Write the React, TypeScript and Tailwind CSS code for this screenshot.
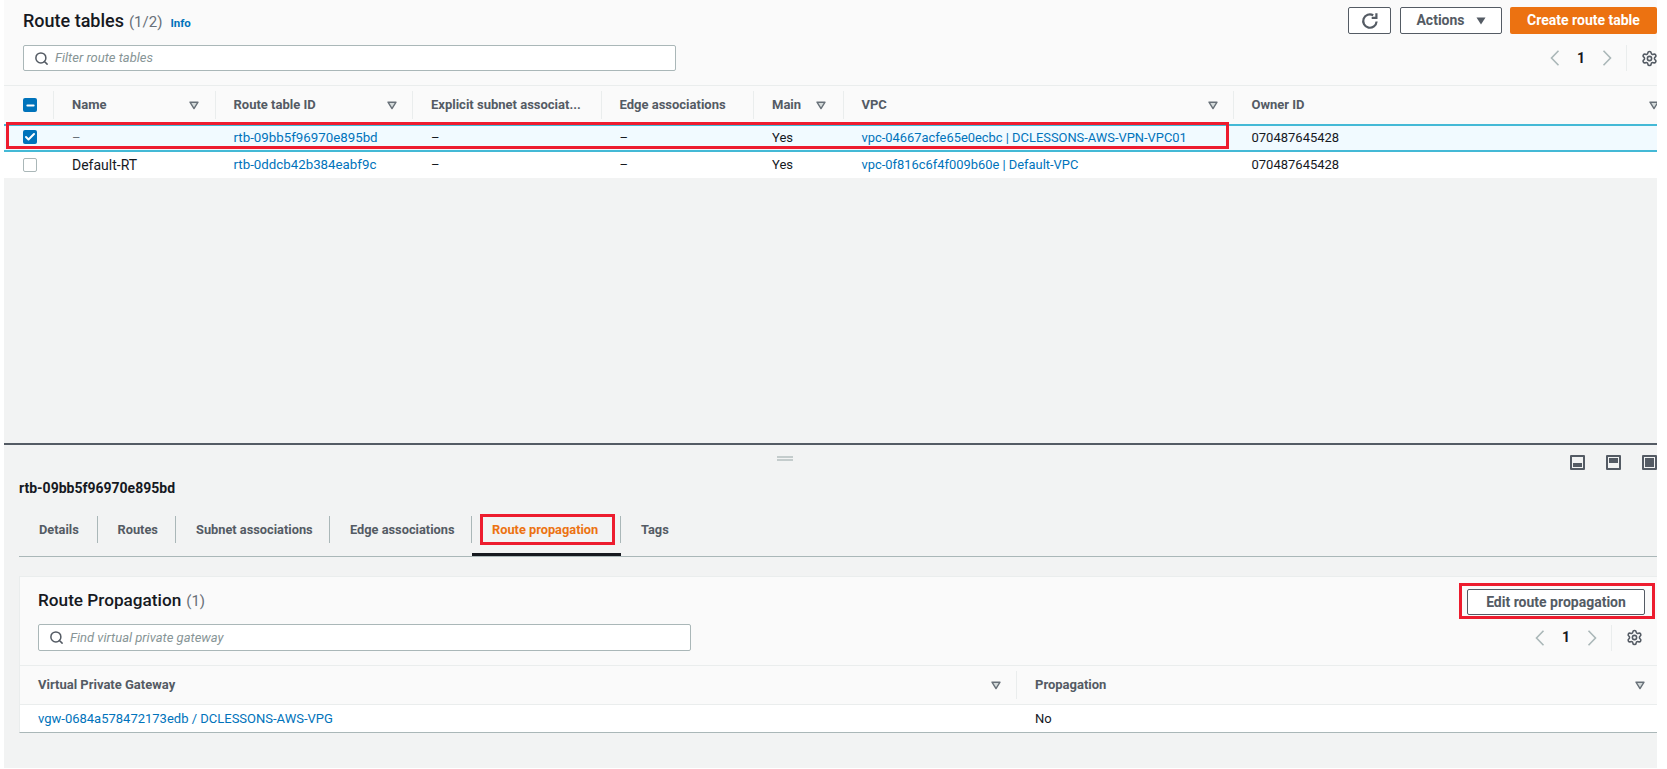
import { Search, Settings, Check, Minus } from "lucide-react";

const Caret = ({ className = "" }: { className?: string }) => (
  <svg viewBox="0 0 10 10" className={`w-[10px] h-[10px] shrink-0 ${className}`}>
    <path d="M1 2.2h8L5 8.6z" fill="#d5dbdb" stroke="#687078" strokeWidth="1.4" strokeLinejoin="round" />
  </svg>
);

const Chevron = ({ d }: { d: string }) => (
  <svg viewBox="0 0 16 16" className="w-4 h-4" fill="none" stroke="#aab7b8" strokeWidth="1.6">
    <path d={d} />
  </svg>
);

const Pager = () => (
  <div className="flex items-center h-[26px]">
    <Chevron d="M11.5 0.8 L4.5 8 L11.5 15.2" />
    <span className="w-[36px] text-center text-[14px] font-bold text-[#16191f]">1</span>
    <Chevron d="M4.5 0.8 L11.5 8 L4.5 15.2" />
    <div className="ml-[11px] h-[26px] border-l border-[#eaeded]" />
    <Settings className="ml-[14px] w-[17px] h-[17px] text-[#545b64]" strokeWidth={2.2} />
  </div>
);

const SearchBox = ({ placeholder, className = "" }: { placeholder: string; className?: string }) => (
  <div className={`w-[653px] flex items-center bg-white border border-[#aab7b8] rounded-[2px] pl-[10px] ${className}`}>
    <Search className="w-[15px] h-[15px] text-[#545b64]" strokeWidth={2.4} />
    <span className="ml-[6px] italic text-[13px] text-[#879596]">{placeholder}</span>
  </div>
);

const cols = "grid grid-cols-[50px_161.5px_197.5px_188.5px_152.5px_89.5px_390px_1fr]";

const headers: { label: string; caret?: string }[] = [
  { label: "Name", caret: "absolute left-[135px]" },
  { label: "Route table ID", caret: "absolute left-[171px]" },
  { label: "Explicit subnet associat..." },
  { label: "Edge associations" },
  { label: "Main", caret: "absolute left-[62px]" },
  { label: "VPC", caret: "absolute left-[364px]" },
  { label: "Owner ID", caret: "absolute left-[415px]" },
];

const Link = ({ children, className = "text-[13px]" }: { children: React.ReactNode; className?: string }) => (
  <span className={`text-[#0073bb] ${className}`}>{children}</span>
);

const Cell = ({ children, className = "" }: { children?: React.ReactNode; className?: string }) => (
  <div className={`pl-[18px] flex items-center whitespace-nowrap overflow-hidden ${className}`}>{children}</div>
);

const PaneIcon = ({ children }: { children: React.ReactNode }) => (
  <svg viewBox="0 0 15 15" className="w-[15px] h-[15px] shrink-0">
    <rect x="0" y="0" width="15" height="15" rx="1" fill="#545b64" />
    {children}
  </svg>
);

const tabs = [
  { label: "Details", w: "w-[78.5px]" },
  { label: "Routes", w: "w-[78.5px]" },
  { label: "Subnet associations", w: "w-[154px]" },
  { label: "Edge associations", w: "w-[142px]" },
  { label: "Route propagation", w: "w-[149px]", active: true },
  { label: "Tags", w: "w-[80px]" },
];

export default function App() {
  return (
    <div className="w-[1667px] h-[769px] bg-white overflow-hidden pl-[4px] pr-[10px] pb-px font-['Roboto','Liberation_Sans',sans-serif] text-[14px] text-[#16191f]">
      <div className="h-[443px] bg-[#f2f3f3] flex flex-col">
        <div className="h-[86px] bg-[#fafafa] border-b border-[#eaeded] pl-[19px] pt-[7px] shrink-0 overflow-hidden">
          <div className="flex items-center justify-between h-[27px]">
            <div className="flex items-baseline">
              <span className="text-[18px] font-medium text-[#16191f]">Route tables</span>
              <span className="ml-[5px] text-[15px] text-[#687078]">(1/2)</span>
              <span className="ml-[8px] text-[11.5px] font-bold text-[#0073bb]">Info</span>
            </div>
            <div className="flex items-stretch h-[27px]">
              <div className="w-[43px] bg-white border border-[#545b64] rounded-[2px] flex items-center justify-center">
                <svg viewBox="0 0 18 18" className="w-[18px] h-[18px]" fill="none" stroke="#545b64" strokeWidth="2.2">
                  <path d="M15.6 9.5A6.7 6.7 0 1 1 12.2 3.2" />
                  <path d="M15.4 1.2v4.7h-4.7" />
                </svg>
              </div>
              <div className="ml-[9px] w-[102px] bg-white border border-[#545b64] rounded-[2px] flex items-center justify-center font-bold text-[#545b64]">
                Actions
                <svg viewBox="0 0 10 8" className="ml-[11px] w-[10px] h-[8px]"><path d="M0.5 0.5h9L5 7.5z" fill="#545b64" /></svg>
              </div>
              <div className="ml-[8px] w-[147px] bg-[#ec7211] rounded-[2px] flex items-center justify-center font-bold text-white">
                Create route table
              </div>
            </div>
          </div>
          <div className="flex items-center justify-between mt-[11px] -mr-px">
            <SearchBox placeholder="Filter route tables" className="h-[26px]" />
            <Pager />
          </div>
        </div>

        <div className={`${cols} h-[38px] bg-[#fafafa] font-bold text-[13px] text-[#545b64] shrink-0 overflow-hidden`}>
          <div className="flex items-center pl-[19px] h-[28px] self-center border-r border-[#eaeded]">
            <div className="w-[14px] h-[14px] rounded-[2px] bg-[#0073bb] flex items-center justify-center">
              <Minus className="w-[11px] h-[11px] text-white" strokeWidth={4} />
            </div>
          </div>
          {headers.map((h, i) => (
            <div key={h.label} className={`relative flex items-center pl-[18px] h-[28px] self-center whitespace-nowrap ${i < 6 ? "border-r border-[#eaeded]" : ""}`}>
              {h.label}
              {h.caret && <Caret className={h.caret} />}
            </div>
          ))}
        </div>

        <div className={`relative ${cols} h-[28px] bg-[#f1faff] border-y-2 border-[#44b9d6] shrink-0 text-[13px]`}>
          <div className="flex items-center pl-[19px] pb-[2px]">
            <div className="w-[14px] h-[14px] rounded-[2px] bg-[#0073bb] flex items-center justify-center">
              <Check className="w-[12px] h-[12px] text-white" strokeWidth={4} />
            </div>
          </div>
          <Cell><span className="text-[#687078]">–</span></Cell>
          <Cell><Link className="text-[13.3px]">rtb-09bb5f96970e895bd</Link></Cell>
          <Cell>–</Cell>
          <Cell>–</Cell>
          <Cell>Yes</Cell>
          <Cell><Link className="text-[12.9px]">vpc-04667acfe65e0ecbc | DCLESSONS-AWS-VPN-VPC01</Link></Cell>
          <Cell>070487645428</Cell>
          <div className="absolute left-[2px] top-[-4px] w-[1223px] h-[27px] border-[3px] border-[#ed1c2e]" />
        </div>

        <div className={`${cols} h-[26px] bg-white shrink-0 text-[13px]`}>
          <div className="flex items-center pl-[19px] pb-[1px]">
            <div className="w-[14px] h-[14px] rounded-[2px] bg-white border border-[#aab7b8]" />
          </div>
          <Cell className="text-[14px]">Default-RT</Cell>
          <Cell><Link className="text-[13.3px]">rtb-0ddcb42b384eabf9c</Link></Cell>
          <Cell>–</Cell>
          <Cell>–</Cell>
          <Cell>Yes</Cell>
          <Cell><Link className="text-[12.9px]">vpc-0f816c6f4f009b60e | Default-VPC</Link></Cell>
          <Cell>070487645428</Cell>
        </div>
      </div>

      <div className="relative h-[325px] bg-[#f2f3f3] border-t-2 border-[#545b64] pl-[15px]">
        <div className="absolute left-[773px] top-[11px] w-[16px] h-[5px] border-y-2 border-[#c4cccc]" />
        <div className="flex justify-end gap-[21px] pt-[10px] overflow-hidden">
          <PaneIcon>
            <rect x="2" y="2" width="11" height="11" fill="#f2f3f3" />
            <rect x="3" y="8" width="9" height="4" fill="#545b64" />
          </PaneIcon>
          <PaneIcon>
            <rect x="2" y="2" width="11" height="11" fill="#f2f3f3" />
            <rect x="3" y="3" width="9" height="5" fill="#545b64" />
          </PaneIcon>
          <PaneIcon>
            <rect x="2.5" y="2.5" width="10" height="10" fill="none" stroke="#f2f3f3" strokeWidth="1" />
          </PaneIcon>
        </div>
        <div className="mt-[8px] h-[20px] leading-[20px] font-bold">rtb-09bb5f96970e895bd</div>

        <div className="mt-[16px] h-[43px] border-b border-[#aab7b8] flex items-start text-[12.8px]">
          {tabs.map((t, i) => (
            <div key={t.label} className={`relative pt-[2px] shrink-0 ${t.w} ${t.active ? "border-b-[3px] border-[#16191f] h-[42px]" : "h-[41px]"}`}>
              <div className={`h-[27px] pl-[20px] flex items-center font-bold whitespace-nowrap ${i < 5 ? "border-r border-[#aab7b8]" : ""} ${t.active ? "text-[#ec7211]" : "text-[#545b64]"}`}>
                {t.label}
              </div>
              {t.active && <div className="absolute left-[8px] top-0 w-[135px] h-[31px] border-[3px] border-[#ed1c2e]" />}
            </div>
          ))}
        </div>

        <div className="mt-[19px] bg-[#fafafa] border-t border-[#eaeded] border-l border-l-[#eaeded] border-b border-b-[#aab7b8]">
          <div className="h-[88px] pl-[18px] pr-[12px] pt-[12px]">
            <div className="flex items-center justify-between h-[26px]">
              <div className="flex items-baseline -mt-[2px]">
                <span className="text-[17.2px] font-medium">Route Propagation</span>
                <span className="ml-[5px] text-[15px] text-[#687078]">(1)</span>
              </div>
              <div className="relative w-[178px] h-[26px] bg-white border border-[#545b64] rounded-[2px] flex items-center justify-center font-bold text-[#545b64]">
                Edit route propagation
                <div className="absolute -left-[9px] -right-[11px] -top-[7px] -bottom-[5px] border-[3px] border-[#ed1c2e]" />
              </div>
            </div>
            <div className="flex items-center justify-between mt-[9px]">
              <SearchBox placeholder="Find virtual private gateway" className="h-[27px]" />
              <div className="mr-[2px]"><Pager /></div>
            </div>
          </div>
          <div className="grid grid-cols-[997px_1fr] h-[39px] border-t border-[#eaeded] font-bold text-[13px] text-[#545b64] items-center">
            <div className="relative h-[28px] pl-[18px] flex items-center border-r border-[#eaeded]">
              Virtual Private Gateway
              <Caret className="absolute left-[971px]" />
            </div>
            <div className="relative h-[28px] pl-[18px] flex items-center">
              Propagation
              <Caret className="absolute left-[618px]" />
            </div>
          </div>
          <div className="grid grid-cols-[997px_1fr] h-[28px] bg-white border-t border-[#eaeded] items-center text-[13px]">
            <div className="pl-[18px]"><Link>vgw-0684a578472173edb / DCLESSONS-AWS-VPG</Link></div>
            <div className="pl-[18px]">No</div>
          </div>
        </div>
      </div>
    </div>
  );
}
